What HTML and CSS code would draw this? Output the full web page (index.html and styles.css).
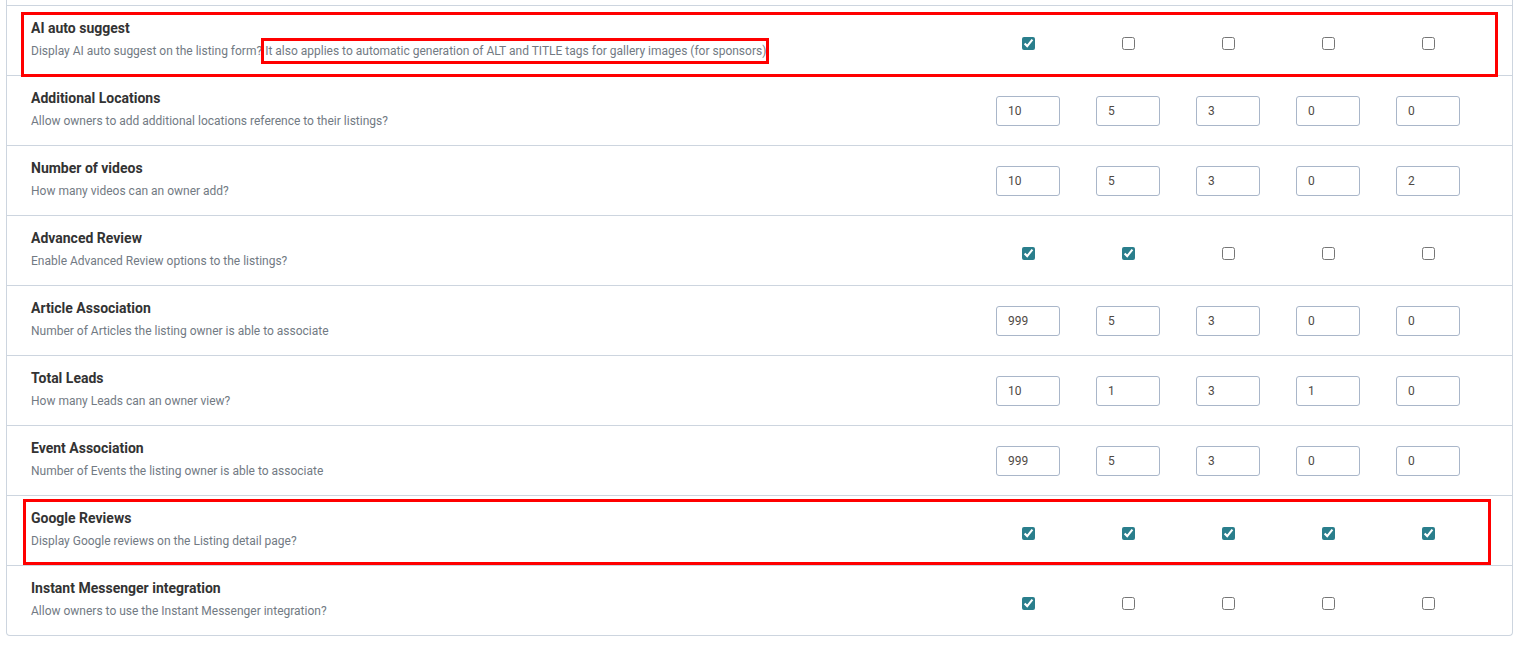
FILE: index.html
```html
<!DOCTYPE html>
<html lang="en">
  <head>
    <meta charset="UTF-8" />
    <meta name="viewport" content="width=device-width, initial-scale=1.0" />
    <title>Listing Levels</title>
    <link rel="stylesheet" href="styles.css">
  </head>
  <body>
    <div class="levels-panel">
      <div class="prev-row"></div>

      <div class="level-row marked-top">
        <div class="field-info">
          <h4 class="field-title">AI auto suggest</h4>
          <p class="field-desc">Display AI auto suggest on the listing form? <span class="marked-text">It also applies to automatic generation of ALT and TITLE tags for gallery images (for sponsors)</span>.</p>
        </div>
        <div class="field-values">
          <div class="value-cell"><input type="checkbox" checked /></div>
          <div class="value-cell"><input type="checkbox" /></div>
          <div class="value-cell"><input type="checkbox" /></div>
          <div class="value-cell"><input type="checkbox" /></div>
          <div class="value-cell"><input type="checkbox" /></div>
        </div>
      </div>

      <div class="level-row">
        <div class="field-info">
          <h4 class="field-title">Additional Locations</h4>
          <p class="field-desc">Allow owners to add additional locations reference to their listings?</p>
        </div>
        <div class="field-values">
          <div class="value-cell"><input type="text" value="10" /></div>
          <div class="value-cell"><input type="text" value="5" /></div>
          <div class="value-cell"><input type="text" value="3" /></div>
          <div class="value-cell"><input type="text" value="0" /></div>
          <div class="value-cell"><input type="text" value="0" /></div>
        </div>
      </div>

      <div class="level-row">
        <div class="field-info">
          <h4 class="field-title">Number of videos</h4>
          <p class="field-desc">How many videos can an owner add?</p>
        </div>
        <div class="field-values">
          <div class="value-cell"><input type="text" value="10" /></div>
          <div class="value-cell"><input type="text" value="5" /></div>
          <div class="value-cell"><input type="text" value="3" /></div>
          <div class="value-cell"><input type="text" value="0" /></div>
          <div class="value-cell"><input type="text" value="2" /></div>
        </div>
      </div>

      <div class="level-row">
        <div class="field-info">
          <h4 class="field-title">Advanced Review</h4>
          <p class="field-desc">Enable Advanced Review options to the listings?</p>
        </div>
        <div class="field-values">
          <div class="value-cell"><input type="checkbox" checked /></div>
          <div class="value-cell"><input type="checkbox" checked /></div>
          <div class="value-cell"><input type="checkbox" /></div>
          <div class="value-cell"><input type="checkbox" /></div>
          <div class="value-cell"><input type="checkbox" /></div>
        </div>
      </div>

      <div class="level-row">
        <div class="field-info">
          <h4 class="field-title">Article Association</h4>
          <p class="field-desc">Number of Articles the listing owner is able to associate</p>
        </div>
        <div class="field-values">
          <div class="value-cell"><input type="text" value="999" /></div>
          <div class="value-cell"><input type="text" value="5" /></div>
          <div class="value-cell"><input type="text" value="3" /></div>
          <div class="value-cell"><input type="text" value="0" /></div>
          <div class="value-cell"><input type="text" value="0" /></div>
        </div>
      </div>

      <div class="level-row">
        <div class="field-info">
          <h4 class="field-title">Total Leads</h4>
          <p class="field-desc">How many Leads can an owner view?</p>
        </div>
        <div class="field-values">
          <div class="value-cell"><input type="text" value="10" /></div>
          <div class="value-cell"><input type="text" value="1" /></div>
          <div class="value-cell"><input type="text" value="3" /></div>
          <div class="value-cell"><input type="text" value="1" /></div>
          <div class="value-cell"><input type="text" value="0" /></div>
        </div>
      </div>

      <div class="level-row">
        <div class="field-info">
          <h4 class="field-title">Event Association</h4>
          <p class="field-desc">Number of Events the listing owner is able to associate</p>
        </div>
        <div class="field-values">
          <div class="value-cell"><input type="text" value="999" /></div>
          <div class="value-cell"><input type="text" value="5" /></div>
          <div class="value-cell"><input type="text" value="3" /></div>
          <div class="value-cell"><input type="text" value="0" /></div>
          <div class="value-cell"><input type="text" value="0" /></div>
        </div>
      </div>

      <div class="level-row marked-google">
        <div class="field-info">
          <h4 class="field-title">Google Reviews</h4>
          <p class="field-desc">Display Google reviews on the Listing detail page?</p>
        </div>
        <div class="field-values">
          <div class="value-cell"><input type="checkbox" checked /></div>
          <div class="value-cell"><input type="checkbox" checked /></div>
          <div class="value-cell"><input type="checkbox" checked /></div>
          <div class="value-cell"><input type="checkbox" checked /></div>
          <div class="value-cell"><input type="checkbox" checked /></div>
        </div>
      </div>

      <div class="level-row">
        <div class="field-info">
          <h4 class="field-title">Instant Messenger integration</h4>
          <p class="field-desc">Allow owners to use the Instant Messenger integration?</p>
        </div>
        <div class="field-values">
          <div class="value-cell"><input type="checkbox" checked /></div>
          <div class="value-cell"><input type="checkbox" /></div>
          <div class="value-cell"><input type="checkbox" /></div>
          <div class="value-cell"><input type="checkbox" /></div>
          <div class="value-cell"><input type="checkbox" /></div>
        </div>
      </div>
    </div>
  </body>
</html>
```

FILE: styles.css
```css
/* Global Styles */
*,
*::before,
*::after {
  box-sizing: border-box;
  margin: 0;
  padding: 0;
}
body {
  font-family: Roboto, "Liberation Sans", Arial, sans-serif;
  background: #fff;
  color: #333;
}
/* Panel */
.levels-panel {
  width: 1507px;
  margin-left: 6px;
  border: 1px solid #cdd5df;
  border-top: none;
  border-radius: 0 0 4px 4px;
}
.prev-row {
  height: 6px;
  border-bottom: 1px solid #cdd5df;
}
.level-row {
  position: relative;
  display: flex;
  align-items: center;
  height: 70px;
  padding: 0 34px 0 24px;
  border-bottom: 1px solid #cdd5df;
}
.level-row:last-child {
  border-bottom: none;
  height: 69px;
}
.field-info {
  flex: 1;
  padding-bottom: 4px;
}
.field-title {
  font-size: 14px;
  font-weight: 700;
  line-height: 20px;
  color: #333;
}
.field-desc {
  margin-top: 4px;
  font-size: 12px;
  line-height: 18px;
  color: #727a83;
}
.field-values {
  display: flex;
}
.value-cell {
  width: 100px;
  display: flex;
  justify-content: center;
}
.value-cell input[type="text"] {
  width: 64px;
  height: 30px;
  padding: 0 11px;
  border: 1px solid #a9b6c9;
  border-radius: 3px;
  font-family: Roboto, "Liberation Sans", Arial, sans-serif;
  font-size: 12px;
  color: #4f4a45;
  outline: none;
}
.value-cell input[type="checkbox"] {
  width: 13px;
  height: 13px;
  margin-top: 5px;
  accent-color: #2a7e8c;
}
/* Red annotation boxes */
.marked-top::after,
.marked-google::after {
  content: "";
  position: absolute;
  border: 3px solid #ff0000;
  pointer-events: none;
}
.marked-top::after {
  left: 14px;
  top: 6px;
  width: 1477px;
  height: 65px;
}
.marked-google::after {
  left: 16px;
  top: 3px;
  width: 1468px;
  height: 66px;
}
.marked-text {
  position: relative;
}
.marked-text::after {
  content: "";
  position: absolute;
  left: -4px;
  right: -3px;
  top: -6px;
  bottom: -6px;
  border: 3px solid #ff0000;
}
```
